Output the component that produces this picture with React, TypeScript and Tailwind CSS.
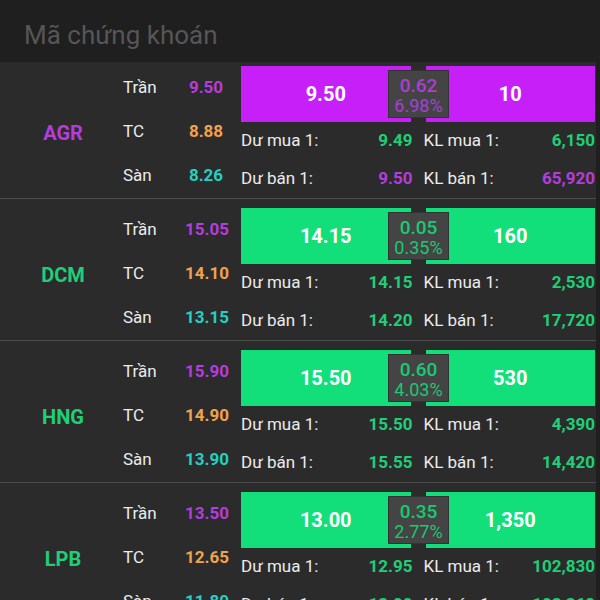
import React from 'react';

type Tone = 'up' | 'ceil';

interface Quote {
  symbol: string;
  tone: Tone;
  tran: string;
  tc: string;
  san: string;
  price: string;
  volume: string;
  change: string;
  percent: string;
  buyPrice: string;
  buyVol: string;
  sellPrice: string;
  sellVol: string;
  buyTone: Tone;
  sellTone: Tone;
}

const quotes: Quote[] = [
  {
    symbol: 'AGR', tone: 'ceil', tran: '9.50', tc: '8.88', san: '8.26',
    price: '9.50', volume: '10', change: '0.62', percent: '6.98%',
    buyPrice: '9.49', buyVol: '6,150', sellPrice: '9.50', sellVol: '65,920',
    buyTone: 'up', sellTone: 'ceil',
  },
  {
    symbol: 'DCM', tone: 'up', tran: '15.05', tc: '14.10', san: '13.15',
    price: '14.15', volume: '160', change: '0.05', percent: '0.35%',
    buyPrice: '14.15', buyVol: '2,530', sellPrice: '14.20', sellVol: '17,720',
    buyTone: 'up', sellTone: 'up',
  },
  {
    symbol: 'HNG', tone: 'up', tran: '15.90', tc: '14.90', san: '13.90',
    price: '15.50', volume: '530', change: '0.60', percent: '4.03%',
    buyPrice: '15.50', buyVol: '4,390', sellPrice: '15.55', sellVol: '14,420',
    buyTone: 'up', sellTone: 'up',
  },
  {
    symbol: 'LPB', tone: 'up', tran: '13.50', tc: '12.65', san: '11.80',
    price: '13.00', volume: '1,350', change: '0.35', percent: '2.77%',
    buyPrice: '12.95', buyVol: '102,830', sellPrice: '13.00', sellVol: '103,360',
    buyTone: 'up', sellTone: 'up',
  },
];

const textTone: Record<Tone, string> = {
  up: 'text-[#1fcf78]',
  ceil: 'text-[#b43ddc]',
};

const boxTone: Record<Tone, string> = {
  up: 'text-[#1cc873]',
  ceil: 'text-[#a93fd4]',
};

const barTone: Record<Tone, string> = {
  up: 'bg-[#12df7a]',
  ceil: 'bg-[#c71ff8]',
};

function RefLine({ label, value, color }: { label: string; value: string; color: string }) {
  return (
    <div className="flex h-[44px] items-center">
      <span className="w-[62px] text-[17px] text-[#ececec]">{label}</span>
      <span className={`w-[42px] text-center text-[17px] font-bold ${color}`}>{value}</span>
    </div>
  );
}

function QuoteRow({ q }: { q: Quote }) {
  return (
    <div className="mr-[4px] flex h-[142px] border-b border-[#4c4c4c] bg-[#2b2b2b]">
      {/* symbol + reference prices */}
      <div className="flex w-[241px] pt-[9px]">
        <div className={`flex w-[126px] items-center justify-center pt-[1px] text-[20px] font-bold ${textTone[q.tone]}`}>
          {q.symbol}
        </div>
        <div className="-ml-[3px] flex flex-col">
          <RefLine label="Trần" value={q.tran} color="text-[#b43ddc]" />
          <RefLine label="TC" value={q.tc} color="text-[#f0a24c]" />
          <RefLine label="Sàn" value={q.san} color="text-[#22d0c2]" />
        </div>
      </div>

      {/* match bar + order book */}
      <div className="flex flex-1 flex-col pr-[1px] pt-[9px]">
        <div className="relative flex h-[56px] gap-[15px]">
          <div className={`flex flex-1 items-center justify-center text-[20px] font-bold text-white ${barTone[q.tone]}`}>
            {q.price}
          </div>
          <div className={`flex flex-1 items-center justify-center text-[20px] font-bold text-white ${barTone[q.tone]}`}>
            {q.volume}
          </div>
          <div className="absolute left-[147px] top-[4px] flex h-[48px] w-[61px] flex-col items-center border border-[#333333] bg-[#444444]">
            <span className={`flex h-[24px] items-end text-[19px] font-medium leading-none ${boxTone[q.tone]}`}>{q.change}</span>
            <span className={`flex h-[22px] items-center text-[18px] leading-none ${boxTone[q.tone]}`}>{q.percent}</span>
          </div>
        </div>
        <div className="grid grid-cols-2 gap-x-[11px] text-[17px]">
          <div className="flex h-[38px] items-center justify-between">
            <span className="text-[#ececec]">Dư mua 1:</span>
            <span className={`font-bold ${textTone[q.buyTone]}`}>{q.buyPrice}</span>
          </div>
          <div className="flex h-[38px] items-center justify-between">
            <span className="text-[#ececec]">KL mua 1:</span>
            <span className={`font-bold ${textTone[q.buyTone]}`}>{q.buyVol}</span>
          </div>
          <div className="flex h-[38px] items-center justify-between">
            <span className="text-[#ececec]">Dư bán 1:</span>
            <span className={`font-bold ${textTone[q.sellTone]}`}>{q.sellPrice}</span>
          </div>
          <div className="flex h-[38px] items-center justify-between">
            <span className="text-[#ececec]">KL bán 1:</span>
            <span className={`font-bold ${textTone[q.sellTone]}`}>{q.sellVol}</span>
          </div>
        </div>
      </div>
    </div>
  );
}

export default function App() {
  return (
    <div className="flex h-[600px] w-[600px] flex-col overflow-hidden bg-[#1f1f1f] font-['Roboto',sans-serif]">
      <header className="flex h-[62px] shrink-0 items-center pl-[24px] pt-[8px] text-[26px] text-[#565656]">
        Mã chứng khoán
      </header>
      <div className="flex-1 overflow-hidden">
        <div className="-mt-[5px]">
          {quotes.map(q => (
            <QuoteRow key={q.symbol} q={q} />
          ))}
        </div>
      </div>
    </div>
  );
}
